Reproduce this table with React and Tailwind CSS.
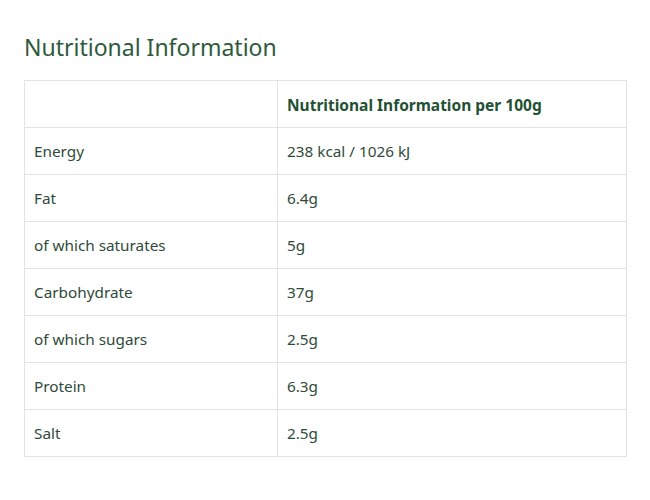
export default function App() {
  const rows = [
    ["Energy", "238 kcal / 1026 kJ"],
    ["Fat", "6.4g"],
    ["of which saturates", "5g"],
    ["Carbohydrate", "37g"],
    ["of which sugars", "2.5g"],
    ["Protein", "6.3g"],
    ["Salt", "2.5g"],
  ];
  return (
    <div className="w-[650px] h-[500px] bg-white px-[24px] pt-[30px] font-['Noto_Sans',sans-serif]">
      <h2 className="text-[23px] leading-[34px] text-[#2e5a3c] font-normal mb-[16px]">Nutritional Information</h2>
      <table className="w-[603px] border-collapse border border-[#e3e3e3] table-fixed">
        <colgroup>
          <col className="w-[253px]" />
          <col />
        </colgroup>
        <thead>
          <tr className="h-[47px]">
            <th className="border border-[#e3e3e3]"></th>
            <th className="border border-[#e3e3e3] text-left px-[9px] pt-[4px] text-[15.5px] font-bold text-[#1f5132]">Nutritional Information per 100g</th>
          </tr>
        </thead>
        <tbody>
          {rows.map(([a, b]) => (
            <tr key={a} className="h-[47px]">
              <td className="border border-[#e3e3e3] px-[9px] text-[15.3px] text-[#2f4a3a]">{a}</td>
              <td className="border border-[#e3e3e3] px-[9px] text-[15.3px] text-[#2f4a3a]">{b}</td>
            </tr>
          ))}
        </tbody>
      </table>
    </div>
  );
}
